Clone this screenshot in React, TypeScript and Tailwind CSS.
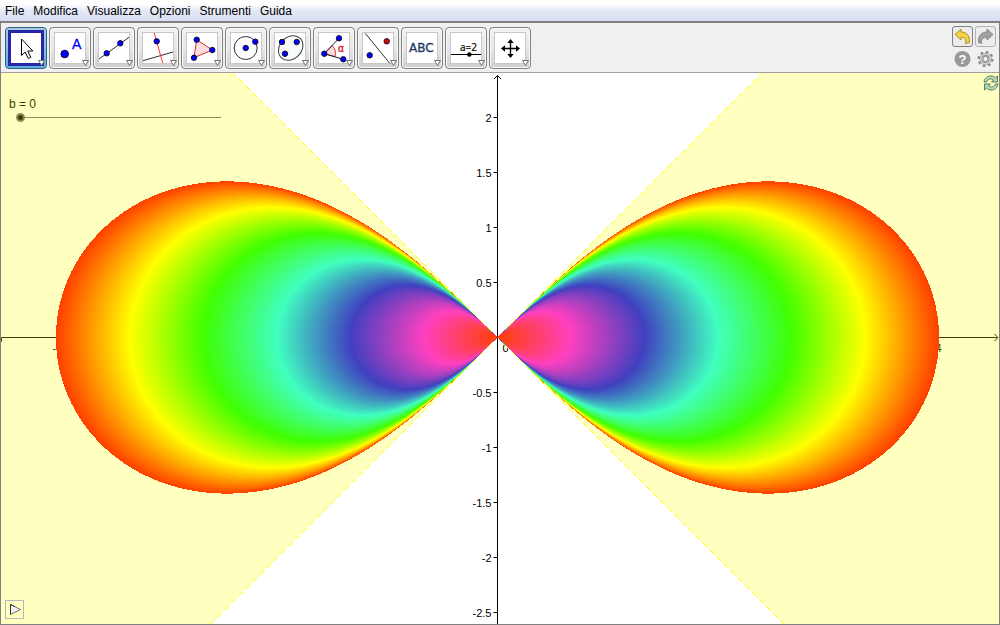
import React, { useState } from 'react';

const MENUS = ['File', 'Modifica', 'Visualizza', 'Opzioni', 'Strumenti', 'Guida'];

// Pixels per unit on both axes, and the half width of the largest curve
const UNIT = 110;
const RADIUS = 441;

const COLOR_STOPS = [
    [255, 64, 0],
    [255, 64, 192],
    [64, 64, 192],
    [64, 255, 192],
    [64, 255, 0],
    [255, 255, 0],
    [255, 64, 0],
];

const Y_TICKS = [2, 1.5, 1, 0.5, -0.5, -1, -1.5, -2, -2.5];

const colorAt = (t: number) => {
    const pos = t * (COLOR_STOPS.length - 1);
    const i = Math.min(Math.floor(pos), COLOR_STOPS.length - 2);
    const rgb = COLOR_STOPS[i].map((c, k) => Math.round(c + (COLOR_STOPS[i + 1][k] - c) * (pos - i)));
    return `rgb(${rgb.join(',')})`;
};

// Lemniscate of Bernoulli: r^2 = a^2 cos(2t)
const lemniscate = (a: number) => {
    const steps = 240;
    const points: string[] = [];
    for (let i = 0; i < steps; i++) {
        const t = (i / steps) * Math.PI * 2;
        const d = 1 + Math.sin(t) ** 2;
        const x = (a * Math.cos(t)) / d;
        const y = (a * Math.sin(t) * Math.cos(t)) / d;
        points.push(`${x.toFixed(2)} ${y.toFixed(2)}`);
    }
    return `M${points.join('L')}Z`;
};

const CURVES = Array.from({ length: RADIUS }, (_, i) => RADIUS - i).map((a) => ({
    a,
    d: lemniscate(a + 0.6),
    fill: colorAt(a / RADIUS),
}));

interface DotProps {
    x: number;
    y: number;
    r?: number;
    fill?: string;
}

const Dot: React.FC<DotProps> = ({ x, y, r = 2.7, fill = '#0000ff' }) => (
    <circle cx={x} cy={y} r={r} fill={fill} stroke="#101030" strokeWidth="1" />
);

const TOOLS: { name: string; icon: React.ReactNode }[] = [
    {
        name: 'Muovi',
        icon: <path d="M16.5 12V28.5L20.2 25L23.3 31.5L25.8 30.3L22.8 24H27.8Z" fill="#fff" stroke="#000" />,
    },
    {
        name: 'Punto',
        icon: (
            <>
                <Dot x={15.7} y={27} r={3.8} />
                <text x="23" y="22" fontSize="14" fill="#0000ff" stroke="#0000ff" strokeWidth="0.3">A</text>
            </>
        ),
    },
    {
        name: 'Retta',
        icon: (
            <>
                <path d="M6 32L36 10.3" stroke="#303030" />
                <Dot x={13.7} y={26.3} />
                <Dot x={27.3} y={16.3} />
            </>
        ),
    },
    {
        name: 'Perpendicolare',
        icon: (
            <>
                <path d="M6 33.7L36 25" stroke="#303030" />
                <path d="M17.3 6L25.7 36" stroke="#ff3030" />
                <Dot x={19.7} y={14.3} />
            </>
        ),
    },
    {
        name: 'Poligono',
        icon: (
            <>
                <path d="M15.7 12.7L31.3 23L13 30.7Z" fill="#fbdcdc" stroke="#d83030" />
                <Dot x={15.7} y={12.7} />
                <Dot x={31.3} y={23} />
                <Dot x={13} y={30.7} />
            </>
        ),
    },
    {
        name: 'Circonferenza',
        icon: (
            <>
                <circle cx="20.7" cy="21" r="11.5" fill="none" stroke="#303030" />
                <Dot x={20.7} y={21} />
                <Dot x={30.3} y={14.7} />
            </>
        ),
    },
    {
        name: 'Conica',
        icon: (
            <>
                <ellipse cx="21.7" cy="21" rx="13.5" ry="10.8" transform="rotate(-45 21.7 21)" fill="#f8fcf8" stroke="#404040" />
                <Dot x={13} y={15} />
                <Dot x={27.7} y={15} />
                <Dot x={16} y={26.7} />
            </>
        ),
    },
    {
        name: 'Angolo',
        icon: (
            <>
                <path d="M11.3 26.7L19 18.5A11.3 11.3 0 0 1 22 29.7Z" fill="#fbdcdc" stroke="#e03030" />
                <path d="M26 11.3L11.3 26.7L30.3 32.3" fill="none" stroke="#202020" />
                <Dot x={11.3} y={26.7} />
                <Dot x={26} y={11.3} />
                <Dot x={30.3} y={32.3} />
                <text x="25" y="25" fontSize="10" fill="#e01010" stroke="#e01010" strokeWidth="0.3">α</text>
            </>
        ),
    },
    {
        name: 'Simmetria',
        icon: (
            <>
                <path d="M8.3 6.3L32.7 36.3" stroke="#303030" />
                <Dot x={29.7} y={14.3} fill="#ee0000" />
                <Dot x={12.7} y={28.3} />
            </>
        ),
    },
    {
        name: 'Testo',
        icon: (
            <text x="8" y="25" fontSize="12" fill="#1c3a63" stroke="#1c3a63" strokeWidth="0.3" className="font-['DejaVu_Sans',sans-serif]">
                ABC
            </text>
        ),
    },
    {
        name: 'Slider',
        icon: (
            <>
                <text x="15" y="24" fontSize="10" fill="#000" stroke="#000" strokeWidth="0.2" className="font-['Open_Sans',sans-serif]">a=2</text>
                <path d="M6 27.5H36" stroke="#000" />
                <circle cx="24.3" cy="27.5" r="2.3" fill="#000" />
            </>
        ),
    },
    {
        name: 'Muovi vista',
        icon: (
            <>
                <path d="M21.5 14V29M14 21.5H29" stroke="#000" strokeWidth="1.4" />
                <path d="M21.5 12L18.3 16H24.7ZM21.5 31L18.3 27H24.7ZM12 21.5L16 18.3V24.7ZM31 21.5L27 18.3V24.7Z" fill="#000" />
            </>
        ),
    },
];

const ToolButton: React.FC<{ name: string; icon: React.ReactNode; selected: boolean; onClick: () => void }> = ({
    name,
    icon,
    selected,
    onClick,
}) => (
    <button
        type="button"
        aria-label={name}
        aria-pressed={selected}
        onClick={onClick}
        className={
            selected
                ? 'size-[42px] shrink-0 rounded-[4px] border border-[#2c628b] bg-linear-to-b from-[#a9cbe0] via-[#8cc0dd] to-[#5fadd6]'
                : 'size-[42px] shrink-0 rounded-[4px] border border-[#808080] bg-linear-to-b from-[#f2f2f2] via-[#e6e6e6] to-[#cfcfcf] shadow-[inset_0_0_0_1px_#fafafa]'
        }
    >
        <svg viewBox="1 1 40 40" className="size-[40px] font-['Liberation_Sans',sans-serif]">
            {selected ? (
                <rect x="4.5" y="4.5" width="33" height="33" fill="#fff" stroke="#2626aa" strokeWidth="3" />
            ) : (
                <rect x="5.5" y="5.5" width="31" height="31" fill="#fff" stroke="#c8c8c8" />
            )}
            {icon}
            <path d="M33.5 33.5H39.5L36.5 38.5Z" fill="#fff" stroke="#707070" />
        </svg>
    </button>
);

const Toolbar: React.FC = () => {
    const [active, setActive] = useState('Muovi');

    return (
        <div className="flex items-center justify-between border-b border-[#a0a0a0] bg-[#f0f0f0] pt-[3px] pr-[3px] pb-[2px] pl-1">
            <div className="flex gap-[2px]">
                {TOOLS.map((tool) => (
                    <ToolButton key={tool.name} {...tool} selected={tool.name === active} onClick={() => setActive(tool.name)} />
                ))}
            </div>
            <div className="grid grid-cols-2 gap-[2px]">
                <button type="button" aria-label="Annulla" className="size-[21px] rounded-[3px] border border-[#808080] bg-[#ececec]">
                    <svg viewBox="0 0 19 19" className="size-[19px]">
                        <path d="M2 7.5L8 2V5C13 5 17 8 16.5 15.5L12.5 16.5C13.5 12 12 10.5 8 10.5V13Z" fill="#f3d347" stroke="#b08c18" strokeLinejoin="round" />
                    </svg>
                </button>
                <button type="button" aria-label="Ripristina" className="size-[21px] rounded-[3px] border border-[#b0b0b0] bg-[#ececec]">
                    <svg viewBox="0 0 19 19" className="size-[19px]">
                        <path d="M17 7.5L11 2V5C6 5 2 8 2.5 15.5L5.5 16.5C5 12 7 10.5 11 10.5V13Z" fill="#a0a0a0" stroke="#8a8a8a" strokeLinejoin="round" />
                    </svg>
                </button>
                <button type="button" aria-label="Aiuto" className="size-[21px]">
                    <svg viewBox="0 0 21 21" className="size-[21px]">
                        <circle cx="10.5" cy="10" r="8" fill="#999" />
                        <text x="10.5" y="14.5" fontSize="13" fontWeight="bold" fill="#fff" textAnchor="middle" className="font-['Liberation_Sans',sans-serif]">?</text>
                    </svg>
                </button>
                <button type="button" aria-label="Preferenze" className="size-[21px]">
                    <svg viewBox="0 0 21 21" className="size-[21px]">
                        <circle cx="10.5" cy="10" r="6.8" fill="none" stroke="#8c8c8c" strokeWidth="2.6" strokeDasharray="2.67 2.67" />
                        <circle cx="10.5" cy="10" r="4.6" fill="none" stroke="#8c8c8c" strokeWidth="3" />
                        <circle cx="10.5" cy="10" r="4.8" fill="none" stroke="#d4d4d4" strokeWidth="1.6" />
                        <circle cx="10.5" cy="10" r="2.6" fill="#f0f0f0" stroke="#8c8c8c" />
                    </svg>
                </button>
            </div>
        </div>
    );
};

const Plot: React.FC = () => (
    <svg viewBox="-496.5 -264.5 998 551" className="block w-full bg-white font-['Liberation_Sans',sans-serif]" role="img" aria-label="Lemniscata">
        {/* Axes */}
        <g stroke="#000" fill="none">
            <path d="M0 287V-262M-3.5 -258.5L0 -262L3.5 -258.5" />
            <path d="M-496 4V0H500M497 -3.5L500.5 0L497 3.5" />
            {Y_TICKS.map((v) => (
                <path key={v} d={`M-4 ${-v * UNIT}H0`} />
            ))}
        </g>
        <g fontSize="11" fill="#000">
            {Y_TICKS.map((v) => (
                <text key={v} x="-6" y={-v * UNIT + 4} textAnchor="end">{v}</text>
            ))}
            <text x="-445" y="14">-4</text>
            <text x="5" y="14">0</text>
            <text x="438" y="14">4</text>
        </g>

        {/* Region |y| < |x| */}
        <path d="M0 0L-600 -600V600ZM0 0L600 -600V600Z" fill="#ffff00" fillOpacity="0.25" />
        <path d="M0 0L-300 -300M0 0L300 -300M0 0L-300 300M0 0L300 300" stroke="#ffff00" strokeDasharray="6 4" />

        <g shapeRendering="crispEdges">
            {CURVES.map((c) => (
                <path key={c.a} d={c.d} fill={c.fill} />
            ))}
        </g>
    </svg>
);

const GraphicsView: React.FC = () => {
    const [b, setB] = useState(0);

    return (
        <main className="relative">
            <Plot />

            {/* Slider on the canvas */}
            <div className="absolute top-6 left-2 flex flex-col text-xs text-[#404000]">
                <label htmlFor="slider-b" className="leading-[15px]">b = {b}</label>
                <input
                    id="slider-b"
                    type="range"
                    min="0"
                    max="5"
                    step="0.1"
                    value={b}
                    onChange={(e) => setB(Number(e.target.value))}
                    className="ml-[7px] h-[11px] w-[205px] appearance-none bg-[linear-gradient(#8c8c5c,#8c8c5c)] bg-[length:100%_1px] bg-center bg-no-repeat [&::-webkit-slider-thumb]:size-[9px] [&::-webkit-slider-thumb]:appearance-none [&::-webkit-slider-thumb]:rounded-full [&::-webkit-slider-thumb]:border-2 [&::-webkit-slider-thumb]:border-[#8c8c5c] [&::-webkit-slider-thumb]:bg-[#404000]"
                />
            </div>

            <button type="button" aria-label="Aggiorna" className="absolute top-[2px] right-0 size-4">
                <svg viewBox="0 0 16 16" className="size-4" fill="#b9d9ae" stroke="#4f8068" strokeLinejoin="round">
                    <path d="M1 7C1.5 3 4.500 1 8 1C10 1 11.5 1.7 12.5 2.8L14.5 1V7H8.5L10.5 5C8 3.2 4.5 4 3.5 7Z" />
                    <path d="M15 9C14.5 13 11.5 15 8 15C6 15 4.5 14.3 3.5 13.2L1.5 15V9H7.5L5.5 11C8 12.8 11.5 12 12.5 9Z" />
                </svg>
            </button>

            <button type="button" aria-label="Avvia animazione" className="absolute bottom-[5px] left-1 size-[19px] border border-[#b8b8b8]">
                <svg viewBox="0 0 17 17" className="size-[17px]">
                    <path d="M4.5 3.5L14.5 8.5L4.5 13.5Z" fill="#f2f2f2" stroke="#707070" />
                    <path d="M4.5 13.5V3.5L9 5.7" fill="none" stroke="#303030" />
                </svg>
            </button>
        </main>
    );
};

export default function App() {
    return (
        <div className="bg-[#f0f0f0] font-['Liberation_Sans',sans-serif] text-xs text-black">
            <nav className="flex h-[21px] items-center gap-[9px] bg-linear-to-b from-white from-20% via-[#e4e9f6] via-50% to-[#d8def0] px-[5px]">
                {MENUS.map((menu) => (
                    <button key={menu} type="button">{menu}</button>
                ))}
            </nav>
            <div className="border border-t-2 border-[#808080]">
                <Toolbar />
                <GraphicsView />
            </div>
        </div>
    );
}
